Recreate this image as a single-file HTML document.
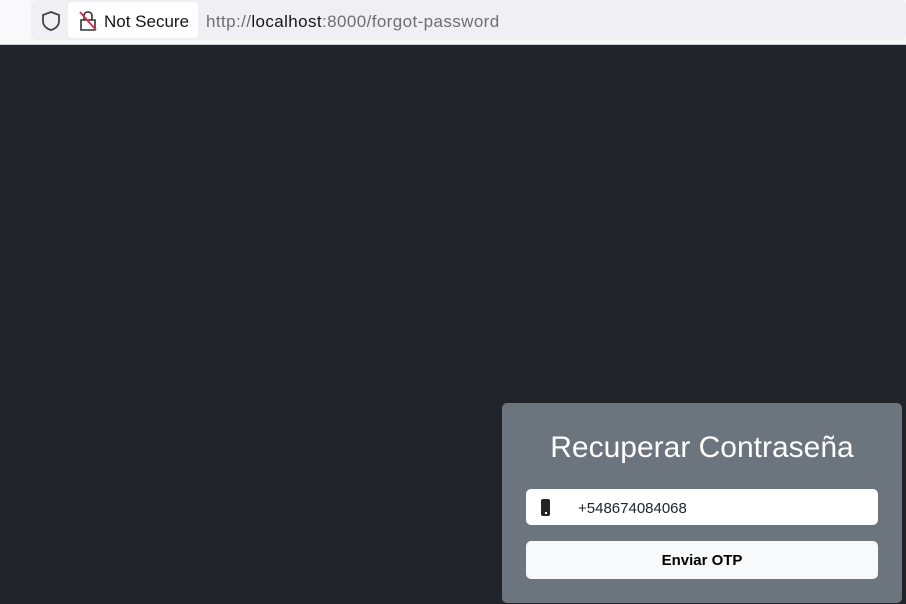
<!DOCTYPE html>
<html><head><meta charset="utf-8"><style>
*{margin:0;padding:0;box-sizing:border-box}
body{width:906px;height:604px;overflow:hidden;background:#212529;font-family:"Liberation Sans",sans-serif;position:relative}
.bar{position:absolute;left:0;top:0;width:906px;height:45px;background:#f9f9fb;border-bottom:1px solid #cfcfd8}
.url{position:absolute;left:31px;top:0;width:875px;height:40px;background:#f0f0f4;border-radius:6px}
.chip{position:absolute;left:68px;top:2px;width:130px;height:36px;background:#fff;border-radius:4px}
.t{position:absolute;font-size:17px;top:12px;white-space:nowrap}
.card{position:absolute;left:502px;top:403px;width:400px;height:200px;background:#6c757d;border-radius:5px}
.title{position:absolute;left:0;width:400px;top:28px;text-align:center;color:#fff;font-size:30px;font-weight:300}
.inp{position:absolute;left:24px;top:86px;width:352px;height:36px;background:#fff;border-radius:5px}
.btn{position:absolute;left:24px;top:138px;width:352px;height:38px;background:#f8f9fa;border-radius:5px;text-align:center;font-weight:bold;font-size:15px;line-height:40px;color:#000}
</style></head><body>
<div class="bar"><div class="url"></div><div class="chip"></div>
<svg style="position:absolute;left:41px;top:10px" width="20" height="22" viewBox="0 0 20 22"><path d="M10 2 L18 5 V11 C18 16 14 19 10 20 C6 19 2 16 2 11 V5 Z" fill="none" stroke="#444" stroke-width="1.8"/></svg>
<svg style="position:absolute;left:78px;top:10px" width="20" height="22" viewBox="0 0 20 22"><path d="M6 10 V6 C6 3 8 2 10 2 C12 2 14 3 14 6 V10 M3 10 H17 V20 H3 Z" fill="none" stroke="#333" stroke-width="1.6"/><path d="M2 2 L18 20" stroke="#e22850" stroke-width="1.8"/></svg>
<div class="t" style="left:104px;color:#15141a">Not Secure</div>
<div class="t" style="left:206px;color:#6d6d75;letter-spacing:0.4px">http://<span style="color:#15141a">localhost</span>:8000/forgot-password</div>
</div>
<div class="card">
<div class="title">Recuperar Contraseña</div>
<div class="inp">
<div style="position:absolute;left:15px;top:10px;width:9px;height:17px;background:#212529;border-radius:2px"></div>
<div style="position:absolute;left:19px;top:23px;width:2px;height:2px;background:#fff"></div>
<div style="position:absolute;left:52px;top:11px;font-size:15px;color:#212529">+548674084068</div>
</div>
<div class="btn">Enviar OTP</div>
</div>
</body></html>
